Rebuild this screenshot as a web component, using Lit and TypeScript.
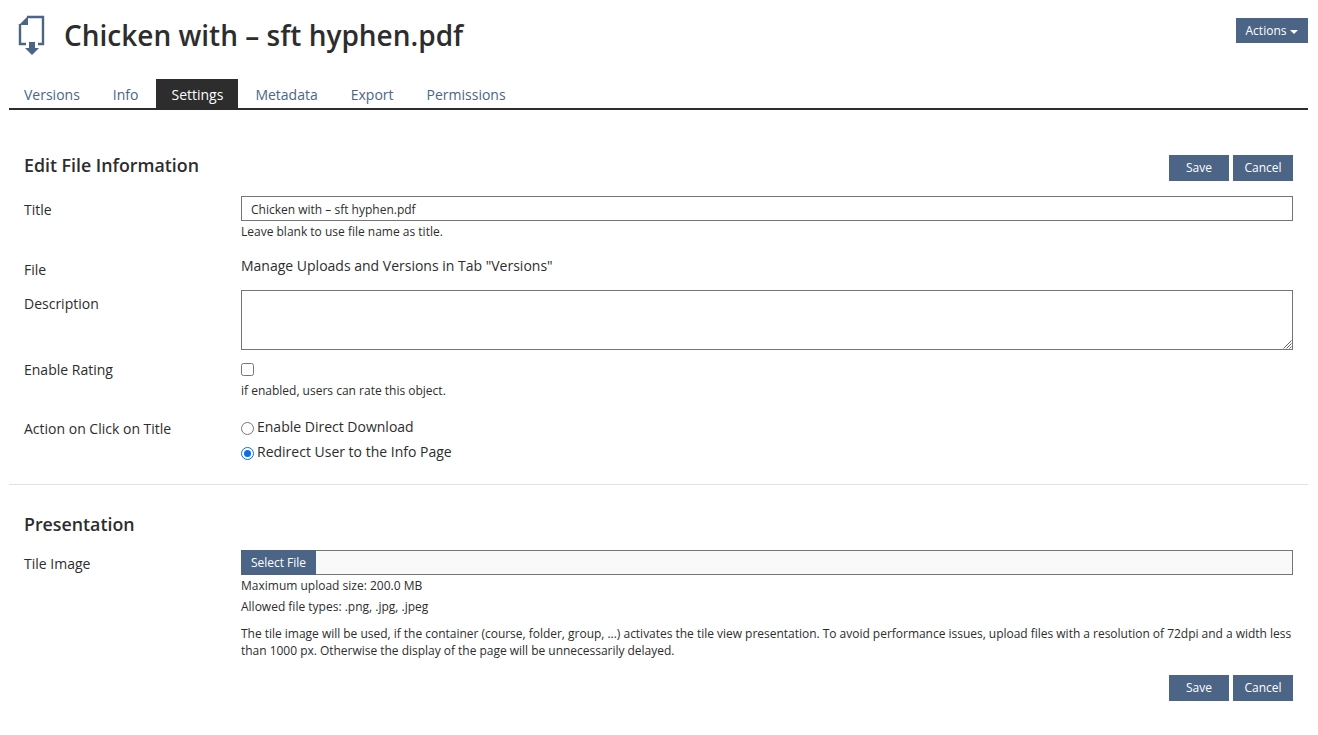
import { LitElement, html, css } from "lit";
import { customElement } from "lit/decorators.js";

@customElement("app-root")
export class AppRoot extends LitElement {
  static styles = css`
    :host {
      display: block;
      font-family: "Open Sans", sans-serif;
      font-size: 14px;
      color: #2d2d2d;
      background: #fff;
      height: 735px;
      overflow: hidden;
      box-sizing: border-box;
      padding: 0 10px 0 9px;
    }
    * { box-sizing: border-box; }
    .head { display: flex; align-items: flex-start; height: 79px; padding-left: 9px; }
    .icon { width: 28px; height: 40px; margin-top: 15px; flex: none; }
    h1 { margin: 15px 0 0 18px; font-size: 28px; font-weight: 600; line-height: 41px; color: #2d2d2d; }
    .actions {
      margin-left: auto; margin-top: 18px; height: 25px; width: 72px;
      background: #4c6586; color: #fff; font-size: 12px; display: flex; align-items: center; justify-content: center; gap: 4px;
    }
    .caret { width: 0; height: 0; border-left: 4px solid transparent; border-right: 4px solid transparent; border-top: 4px solid #fff; margin-top: 2px; }
    .tabs { display: flex; height: 31px; border-bottom: 2px solid #2d2d2d; }
    .tab { line-height: 32px; font-size: 14px; color: #4c6586; height: 29px; }
    .t1 { padding: 0 16px 0 15px; }
    .t2 { padding: 0 18px 0 17px; }
    .t3 { padding: 0 15px; background: #2d2d2d; color: #fff; }
    .t4 { padding: 0 16px 0 17px; }
    .t5 { padding: 0 16px 0 17px; }
    .t6 { padding: 0 16px 0 17px; }
    section { padding: 0 15px; }
    .sec-head { display: flex; justify-content: space-between; align-items: flex-start; padding-top: 44px; height: 86px; }
    .sec-head.pres { padding-top: 28px; height: 65px; }
    h2 { margin: 0; font-size: 17.8px; font-weight: 600; line-height: 22px; color: #2d2d2d; }
    .btns { display: flex; gap: 4px; margin-top: 1px; }
    .btn { width: 60px; height: 26px; padding-bottom: 1px; background: #4c6586; color: #fff; font-size: 12px; display: flex; align-items: center; justify-content: center; }
    .row { display: grid; grid-template-columns: 217px 1fr; }
    .r-title { height: 64px; }
    .r-file { height: 34px; }
    .r-desc { height: 66px; }
    .r-rate { height: 59px; }
    .r-act { height: 65px; }
    .lab { font-size: 14px; line-height: 20px; color: #2d2d2d; }
    .pt { padding-top: 4px; }
    .up { margin-top: -4px; }
    .inp { height: 25px; border: 1px solid #757575; font-size: 12px; line-height: 25px; padding-left: 9px; color: #2d2d2d; }
    .hint { font-size: 12px; line-height: 16px; color: #2d2d2d; }
    .m3 { margin-top: 3px; }
    .m5 { margin-top: 5px; }
    .m7 { margin-top: 7px; }
    .para { margin-top: 10px; line-height: 17px; letter-spacing: -0.02px; }
    .ta { height: 60px; margin-top: -4px; border: 1px solid #757575; position: relative; }
    .grip { position: absolute; right: 0; bottom: 0; width: 10px; height: 10px; }
    .cb { width: 13px; height: 13px; border: 1px solid #767676; border-radius: 2.5px; background: #fff; margin-top: 3px; }
    .opts { margin-top: -5px; }
    .opt { display: flex; align-items: center; gap: 3px; height: 25px; line-height: 20px; font-size: 14px; }
    .radio { width: 13px; height: 13px; border-radius: 50%; border: 1px solid #767676; margin-top: 4px; flex: none; }
    .radio.on { border: 1.5px solid #0a6ee6; padding: 1.5px; }
    .radio.on::after { content: ""; display: block; width: 7px; height: 7px; border-radius: 50%; background: #0a6ee6; }
    hr { border: 0; border-top: 1px solid #e2e2e2; margin: 0; }
    .file { display: flex; height: 25px; border: 1px solid #757575; border-left: 0; background: #f9f9f9; }
    .sel { width: 75px; height: 25px; background: #4c6586; color: #fff; font-size: 12px; display: flex; align-items: center; justify-content: center; margin-top: -1px; }
    .foot { display: flex; justify-content: flex-end; margin-top: 15px; }
  `;

  render() {
    return html`
      <div class="head">
        <svg class="icon" viewBox="0 0 28 40" fill="none">
          <path d="M9 2H25V29H20M8 29H2V9" stroke="#4c6586" stroke-width="2.4"/>
          <path d="M1 10L10 1V10Z" fill="#4c6586"/>
          <path d="M11 27H17V33H21L14 40L7 33H11Z" fill="#4c6586"/>
        </svg>
        <h1>Chicken with – sft hyphen.pdf</h1>
        <div class="actions">Actions <span class="caret"></span></div>
      </div>
      <div class="tabs">
        <div class="tab t1">Versions</div>
        <div class="tab t2">Info</div>
        <div class="tab t3">Settings</div>
        <div class="tab t4">Metadata</div>
        <div class="tab t5">Export</div>
        <div class="tab t6">Permissions</div>
      </div>
      <section>
        <div class="sec-head">
          <h2>Edit File Information</h2>
          <div class="btns"><div class="btn">Save</div><div class="btn">Cancel</div></div>
        </div>
        <div class="row r-title">
          <div class="lab pt">Title</div>
          <div><div class="inp">Chicken with – sft hyphen.pdf</div><div class="hint m3">Leave blank to use file name as title.</div></div>
        </div>
        <div class="row r-file">
          <div class="lab">File</div>
          <div class="lab up">Manage Uploads and Versions in Tab "Versions"</div>
        </div>
        <div class="row r-desc">
          <div class="lab">Description</div>
          <div class="ta"><svg class="grip" viewBox="0 0 10 10"><path d="M9.5 1.5L1.5 9.5M9.5 4.5L4.5 9.5M9.5 7.5L7.5 9.5" stroke="#666" stroke-width="1"/></svg></div>
        </div>
        <div class="row r-rate">
          <div class="lab">Enable Rating</div>
          <div><div class="cb"></div><div class="hint m7">if enabled, users can rate this object.</div></div>
        </div>
        <div class="row r-act">
          <div class="lab">Action on Click on Title</div>
          <div class="opts">
            <div class="opt"><span class="radio"></span>Enable Direct Download</div>
            <div class="opt"><span class="radio on"></span>Redirect User to the Info Page</div>
          </div>
        </div>
      </section>
      <hr />
      <section>
        <div class="sec-head pres"><h2>Presentation</h2></div>
        <div class="row">
          <div class="lab pt">Tile Image</div>
          <div>
            <div class="file"><div class="sel">Select File</div></div>
            <div class="hint m3">Maximum upload size: 200.0 MB</div>
            <div class="hint m5">Allowed file types: .png, .jpg, .jpeg</div>
            <div class="hint para">The tile image will be used, if the container (course, folder, group, ...) activates the tile view presentation. To avoid performance issues, upload files with a resolution of 72dpi and a width less than 1000 px. Otherwise the display of the page will be unnecessarily delayed.</div>
          </div>
        </div>
        <div class="foot"><div class="btns"><div class="btn">Save</div><div class="btn">Cancel</div></div></div>
      </section>
    `;
  }
}
